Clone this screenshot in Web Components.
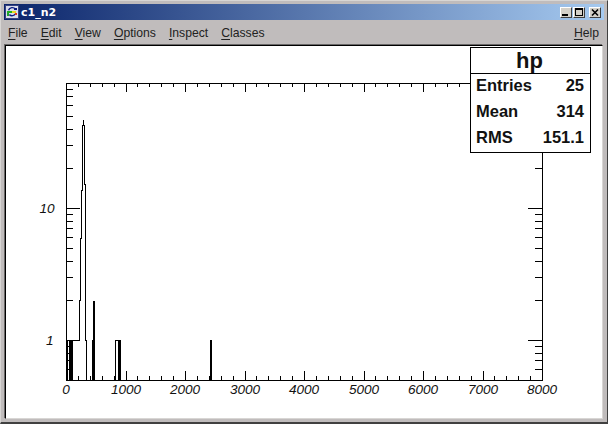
<!DOCTYPE html>
<html>
<head>
<meta charset="utf-8">
<title>c1_n2</title>
<style>
  html, body { margin: 0; padding: 0; width: 608px; height: 424px; overflow: hidden; background: #c0bcbc; }
</style>
</head>
<body>
<root-window>
  <title-bar slot="title">c1_n2</title-bar>
  <menu-bar slot="menu">
    <menu-item key="F">ile</menu-item>
    <menu-item key="E">dit</menu-item>
    <menu-item key="V">iew</menu-item>
    <menu-item key="O">ptions</menu-item>
    <menu-item key="I">nspect</menu-item>
    <menu-item key="C">lasses</menu-item>
    <menu-item slot="end" key="H">elp</menu-item>
  </menu-bar>
  <root-canvas>
    <th1-plot></th1-plot>
    <stats-box slot="over" name="hp">
      <stat-row label="Entries">25</stat-row>
      <stat-row label="Mean">314</stat-row>
      <stat-row label="RMS">151.1</stat-row>
    </stats-box>
  </root-canvas>
</root-window>

<script>
const html = String.raw;

class RootWindow extends HTMLElement {
  constructor() {
    super();
    this.attachShadow({ mode: "open" }).innerHTML = html`
      <style>
        :host {
          display: flex;
          flex-direction: column;
          box-sizing: border-box;
          width: 608px;
          height: 424px;
          padding: 3px 3px 1px 3px;
          background: #c0bcbc;
          border-top: 1px solid #d8d6d4;
          border-left: 1px solid #d8d6d4;
          border-right: 1px solid #404040;
          border-bottom: 2px solid #404040;
        }
      </style>
      <slot name="title"></slot>
      <slot name="menu"></slot>
      <slot></slot>
    `;
  }
}

class TitleBar extends HTMLElement {
  constructor() {
    super();
    this.attachShadow({ mode: "open" }).innerHTML = html`
      <style>
        :host {
          display: flex;
          align-items: center;
          height: 16px;
          padding: 0 3px 0 1px;
          background: linear-gradient(90deg, #0a246a, #a6caf0);
          color: #fff;
          font: bold 11px "DejaVu Sans", sans-serif;
        }
        svg { display: block; margin-right: 2px; flex: none; }
        .text { flex: 1; }
        .btns { display: flex; }
        button {
          box-sizing: border-box;
          width: 12px;
          height: 11px;
          padding: 0;
          margin: 0 0 0 1px;
          background: #d4d0c8;
          border: 1px solid;
          border-color: #fff #404040 #404040 #fff;
          display: block;
        }
        button svg { margin: 0; }
        button.close { margin-left: 4px; }
      </style>
      <svg width="14" height="14" viewBox="0 0 16 16" shape-rendering="crispEdges">
        <rect x="0" y="0" width="16" height="16" fill="#d8dcec"/>
        <rect x="0.5" y="0.5" width="15" height="15" fill="none" stroke="#202a70"/>
        <path d="M4 6 A4.5 4.5 0 0 1 12 5 M12 10 A4.5 4.5 0 0 1 5 11" fill="none" stroke="#0a1a80" stroke-width="1.6" shape-rendering="auto"/>
        <rect x="10" y="3" width="4" height="3" fill="#0a1a80"/>
        <rect x="2" y="7" width="6" height="2" fill="#20b020"/>
        <rect x="2" y="9" width="3" height="4" fill="#20a030"/>
        <rect x="8" y="7" width="5" height="2" fill="#e8d820"/>
        <rect x="11" y="9" width="3" height="2" fill="#e03020"/>
      </svg>
      <span class="text"><slot></slot></span>
      <span class="btns">
        <button tabindex="-1"><svg width="10" height="9" viewBox="0 0 10 9" shape-rendering="crispEdges"><rect x="1" y="6" width="6" height="2"/></svg></button>
        <button tabindex="-1"><svg width="10" height="9" viewBox="0 0 10 9" shape-rendering="crispEdges"><path d="M1 0h8v8h-8z M2 2v5h6v-5z" fill-rule="evenodd"/></svg></button>
        <button class="close" tabindex="-1"><svg width="10" height="9" viewBox="0 0 10 9"><path d="M2 1.5 L8 7.5 M8 1.5 L2 7.5" stroke="#000" stroke-width="1.6"/></svg></button>
      </span>
    `;
  }
}

class MenuBar extends HTMLElement {
  constructor() {
    super();
    this.attachShadow({ mode: "open" }).innerHTML = html`
      <style>
        :host {
          display: flex;
          align-items: center;
          box-sizing: border-box;
          height: 24px;
          padding: 2px 5px 0 4px;
          gap: 13px;
          color: #222;
          font: 12.2px "Liberation Sans", Arial, sans-serif;
        }
        .end { margin-left: auto; display: flex; }
      </style>
      <slot></slot>
      <span class="end"><slot name="end"></slot></span>
    `;
  }
}

class MenuItem extends HTMLElement {
  constructor() {
    super();
    this.attachShadow({ mode: "open" }).innerHTML = html`
      <style>
        :host { display: inline-block; white-space: nowrap; }
        u { text-underline-offset: 2px; }
      </style>
      <u></u><slot></slot>
    `;
    this.shadowRoot.querySelector("u").textContent = this.getAttribute("key");
  }
}

class RootCanvas extends HTMLElement {
  constructor() {
    super();
    this.attachShadow({ mode: "open" }).innerHTML = html`
      <style>
        :host {
          display: block;
          position: relative;
          flex: 1;
          min-height: 0;
          box-sizing: border-box;
          background: #fff;
          border: 1px solid;
          border-color: #000 #d8d6d4 #d8d6d4 #000;
          box-shadow: -1px -1px 0 #6a6868, 1px 1px 0 #c0bcbc;
          margin: 1px 1px 2px 1px;
        }
      </style>
      <slot></slot>
      <slot name="over"></slot>
    `;
  }
}

class Th1Plot extends HTMLElement {
  constructor() {
    super();
    // window coordinates, the canvas content starts at (6,46)
    const ox = 6, oy = 46;
    const x0 = 66, x1 = 542, y0 = 380, y1 = 83;
    const px = (v) => x0 + (v / 8000) * (x1 - x0);
    const py = (v) => 340 - Math.log10(v) * 132;
    let ticks = "";
    let labels = "";
    for (let v = 0; v <= 8000; v += 200) {
      const x = Math.round(px(v)) + 0.5;
      const len = v % 1000 === 0 ? 9 : 4;
      ticks += `M${x} ${y0}V${y0 - len}M${x} ${y1}V${y1 + len}`;
      if (v % 1000 === 0) {
        labels += `<text x="${x - 0.5}" y="394" text-anchor="middle">${v}</text>`;
      }
    }
    const decades = [0.5, 0.6, 0.7, 0.8, 0.9, 1, 2, 3, 4, 5, 6, 7, 8, 9, 10, 20, 30, 40, 50, 60, 70, 80];
    for (const v of decades) {
      const y = Math.round(py(v)) + 0.5;
      const len = v === 1 || v === 10 ? 14 : 7;
      ticks += `M${x0} ${y}H${x0 + len}M${x1} ${y}H${x1 - len}`;
    }
    labels += `<text x="53.5" y="345" text-anchor="end">1</text>`;
    labels += `<text x="54.5" y="213" text-anchor="end">10</text>`;

    // histogram outline traced from the log scale steps
    const outline = `M66.5 340.5 H79.5 V300.5 H80.5 V238.5 H81.5 V190.5 H82.5 V125.5 H83.5 V119.5 H83.5 V125.5 H84.5 V184.5 H85.5 V340.5 H86.5 V380`;
    const bars = [
      [67, 1], [69, 2], [71, 2],
      [92, 1], [93, 2, 301], [115, 1], [118, 3], [210, 2]
    ];
    let barRects = "";
    for (const [x, w, top] of bars) {
      const t = top || 340;
      barRects += `<rect x="${x}" y="${t}" width="${w}" height="${380 - t}"/>`;
    }

    this.attachShadow({ mode: "open" }).innerHTML = html`
      <style>
        :host { display: block; width: 100%; height: 100%; }
        svg { display: block; overflow: hidden; }
        text { font: italic 13.6px "Liberation Sans", Arial, sans-serif; fill: #111; }
      </style>
      <svg width="596" height="372" viewBox="${ox} ${oy} 596 372">
        <g shape-rendering="crispEdges">
          <rect x="${x0 + 0.5}" y="${y1 + 0.5}" width="${x1 - x0}" height="${y0 - y1}" fill="none" stroke="#000"/>
          <path d="${ticks}" fill="none" stroke="#000"/>
          <path d="${outline}" fill="none" stroke="#000"/>
          <path d="M115.5 380 V340.5 H118" fill="none" stroke="#000"/>
          <g fill="#000">${barRects}</g>
        </g>
        ${labels}
      </svg>
    `;
  }
}

class StatsBox extends HTMLElement {
  constructor() {
    super();
    this.attachShadow({ mode: "open" }).innerHTML = html`
      <style>
        :host {
          position: absolute;
          left: 464px;
          top: 1px;
          width: 121px;
          box-sizing: border-box;
          height: 106px;
          display: flex;
          flex-direction: column;
          background: #fff;
          border: 1px solid #000;
          color: #111;
          font: bold 16.5px "Liberation Sans", Arial, sans-serif;
        }
        .name {
          box-sizing: border-box;
          height: 26px;
          padding-right: 2px;
          border-bottom: 1px solid #000;
          display: flex;
          align-items: center;
          justify-content: center;
          font-size: 22px;
        }
        .rows {
          flex: 1;
          display: grid;
          grid-auto-rows: 1fr;
          padding: 0 6px 0 5px;
        }
      </style>
      <div class="name"></div>
      <div class="rows"><slot></slot></div>
    `;
    this.shadowRoot.querySelector(".name").textContent = this.getAttribute("name");
  }
}

class StatRow extends HTMLElement {
  constructor() {
    super();
    this.attachShadow({ mode: "open" }).innerHTML = html`
      <style>
        :host { display: flex; align-items: center; justify-content: space-between; padding-bottom: 3px; }
      </style>
      <span></span><span><slot></slot></span>
    `;
    this.shadowRoot.querySelector("span").textContent = this.getAttribute("label");
  }
}

customElements.define("root-window", RootWindow);
customElements.define("title-bar", TitleBar);
customElements.define("menu-bar", MenuBar);
customElements.define("menu-item", MenuItem);
customElements.define("root-canvas", RootCanvas);
customElements.define("th1-plot", Th1Plot);
customElements.define("stats-box", StatsBox);
customElements.define("stat-row", StatRow);
</script>
</body>
</html>
